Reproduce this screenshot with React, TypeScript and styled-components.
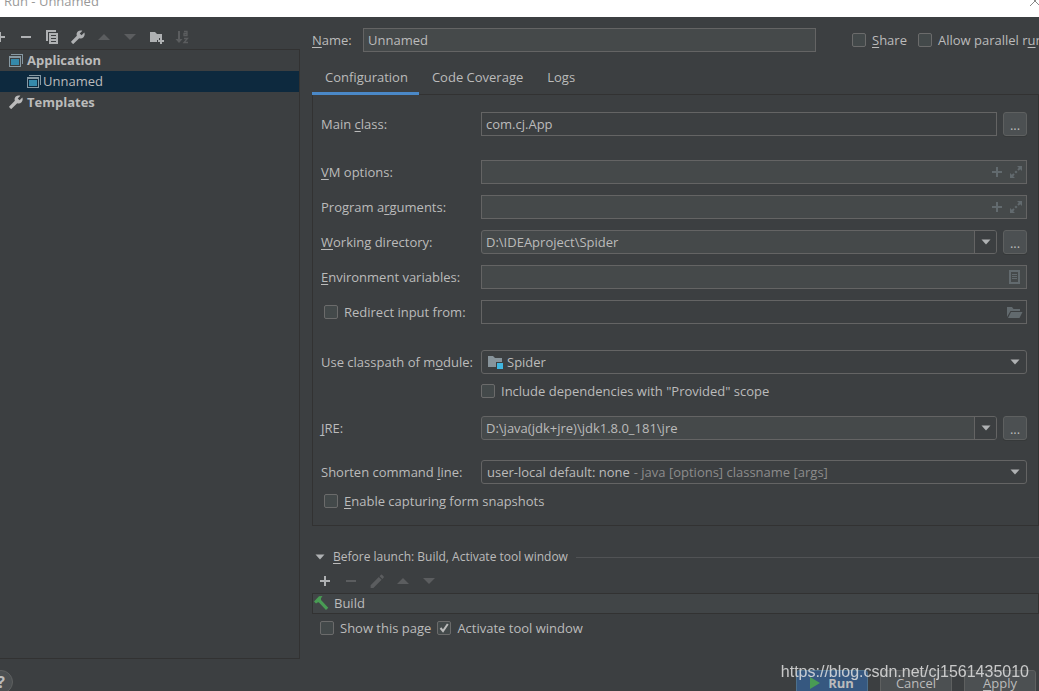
import React, { useId } from 'react';
import styled, { createGlobalStyle, css } from 'styled-components';

const GlobalStyle = createGlobalStyle`
  * { box-sizing: border-box; }
  body {
    margin: 0;
    overflow: hidden;
    background: #3c3f41;
  }
  body, input, button, select {
    font-family: "Open Sans", "Noto Sans", "Noto Sans CJK SC", sans-serif;
    font-size: 13px;
    line-height: 18px;
    color: #bbbbbb;
  }
  u { text-underline-offset: 2px; text-decoration-thickness: 1px; }
`;

const Window = styled.div`
  display: flex;
  flex-direction: column;
  min-height: 100vh;
  overflow: hidden;
`;

const TitleBar = styled.header`
  display: flex;
  justify-content: space-between;
  align-items: flex-end;
  height: 17px;
  padding: 0 0 7px 4px;
  background: #ffffff;
  color: #999999;
`;

const CloseButton = styled.button`
  display: flex;
  width: 10px;
  height: 16px;
  padding: 0;
  border: 0;
  background: none;
`;

const Body = styled.div`
  display: flex;
  flex: 1;
`;

const Sidebar = styled.aside`
  display: flex;
  flex-direction: column;
  flex: none;
  width: 300px;
`;

const Toolbar = styled.div<{ $height: number; $start: number }>`
  display: flex;
  align-items: center;
  gap: 10px;
  height: ${p => p.$height}px;
  margin-left: ${p => p.$start}px;
`;

const SidebarToolbar = styled(Toolbar)`
  padding-top: 8px;
`;

const IconButton = styled.button`
  display: flex;
  width: 16px;
  height: 16px;
  padding: 0;
  border: 0;
  background: none;
  color: #afb1b3;
  &:disabled { color: #5b5d5f; }
`;

const Tree = styled.ul`
  flex: 1;
  margin: 0;
  padding: 0;
  list-style: none;
  border: 1px solid #323232;
  border-left: 0;
`;

const TreeItem = styled.li<{ $level?: number; $selected?: boolean }>`
  display: flex;
  align-items: center;
  gap: ${p => (p.$level ? 1 : 3)}px;
  height: 21px;
  padding-left: ${p => (p.$level ? 26 : 8)}px;
  padding-bottom: 1px;
  font-weight: ${p => (p.$level ? 400 : 700)};
  background: ${p => (p.$selected ? '#0d293e' : 'transparent')};
  color: #bbbbbb;
`;

const Main = styled.main`
  flex: 1;
  min-width: 0;
  padding: 11px 0 18px 12px;
`;

const NameRow = styled.div`
  display: flex;
  align-items: center;
  height: 24px;
  white-space: nowrap;
`;

const NameLabel = styled.label`
  flex: none;
  width: 51px;
`;

const NameOptions = styled.div`
  display: flex;
  gap: 11px;
  flex: none;
  width: 187px;
  margin-left: 36px;
  overflow: hidden;
`;

const fieldBox = css`
  height: 24px;
  border: 1px solid #646464;
  background: #45494a;
`;

const TextInput = styled.input<{ $plain?: boolean }>`
  ${fieldBox}
  flex: 1;
  width: 100%;
  min-width: 0;
  padding: 0 4px;
  outline: none;
  ${p => p.$plain && 'background: #3c3f41;'}
`;

const Tabs = styled.div`
  display: flex;
  height: 35px;
  margin-top: 8px;
  border-bottom: 1px solid #323232;
`;

const Tab = styled.button<{ $active?: boolean }>`
  height: 35px;
  padding: 2px 11px 0 13px;
  border: 0;
  border-bottom: 3px solid ${p => (p.$active ? '#4a88c7' : 'transparent')};
  background: none;
`;

const Panel = styled.section`
  padding: 17px 11px 12px 8px;
  border: 1px solid #323232;
  border-top: 0;
`;

const Row = styled.div<{ $gap?: number }>`
  display: grid;
  grid-template-columns: 160px 1fr;
  align-items: center;
  height: 24px;
  margin-top: ${p => p.$gap ?? 11}px;
  white-space: nowrap;
`;

const Controls = styled.div`
  display: flex;
  gap: 6px;
  grid-column: 2;
  min-width: 0;
`;

const BrowseButton = styled.button`
  flex: none;
  width: 24px;
  height: 24px;
  padding: 2px 0 0;
  border: 1px solid #5e6060;
  border-radius: 3px;
  background: #4c5052;
  box-shadow: 0 1px 0 #36393a;
`;

const IconField = styled.div<{ $plain?: boolean }>`
  ${fieldBox}
  display: flex;
  flex: 1;
  align-items: center;
  gap: 3px;
  padding-right: 2px;
  ${p => p.$plain && 'background: #3c3f41;'}
`;

const BareInput = styled.input`
  flex: 1;
  min-width: 0;
  height: 22px;
  padding: 0 4px;
  border: 0;
  outline: none;
  background: none;
`;

const FieldIcon = styled(IconButton)`
  color: #626a6e;
`;

const Combo = styled.div`
  ${fieldBox}
  display: flex;
  flex: 1;
  min-width: 0;
  border-radius: 3px;
  overflow: hidden;
`;

const ComboArrow = styled.button`
  display: flex;
  align-items: center;
  justify-content: center;
  width: 22px;
  padding: 0;
  border: 0;
  border-left: 1px solid #646464;
  background: #3c3f41;
`;

const SelectBox = styled.div`
  ${fieldBox}
  display: grid;
  flex: 1;
  align-items: center;
  border-radius: 3px;
  background: #3c3f41;
  > * { grid-area: 1 / 1; }
`;

const Select = styled.select`
  appearance: none;
  width: 100%;
  height: 22px;
  padding: 0;
  border: 0;
  outline: none;
  background: none;
  color: transparent;
  option { color: #bbbbbb; background: #3c3f41; }
`;

const SelectValue = styled.span`
  display: flex;
  align-items: center;
  gap: 4px;
  padding: 0 6px 0 5px;
  pointer-events: none;
`;

const Muted = styled.span`
  color: #8c8c8c;
`;

const ArrowSlot = styled.span`
  display: flex;
  margin-left: auto;
`;

const CheckLabel = styled.label<{ $inset?: number }>`
  display: flex;
  align-items: center;
  gap: 6px;
  flex: none;
  padding-left: ${p => p.$inset ?? 0}px;
`;

const CheckBox = styled.input`
  appearance: none;
  flex: none;
  width: 14px;
  height: 14px;
  margin: 0;
  border: 1px solid #6b6b6b;
  border-radius: 2px;
  background: #43494a;
  &:checked + svg { display: block; }
`;

const CheckHolder = styled.span`
  display: grid;
  > * { grid-area: 1 / 1; }
  svg { display: none; pointer-events: none; }
`;

const SectionHeader = styled.div`
  display: flex;
  align-items: center;
  height: 24px;
  margin-top: 19px;
  padding-left: 3px;
  font-size: 12px;
  gap: 8px;
  &::after {
    content: '';
    flex: 1;
    height: 1px;
    background: #515355;
  }
`;

const Expander = styled.button`
  display: flex;
  width: 10px;
  padding: 0;
  border: 0;
  background: none;
`;

const TaskList = styled.ul`
  margin: 0;
  padding: 0;
  list-style: none;
  border: 1px solid #323232;
`;

const Task = styled.li`
  display: flex;
  align-items: center;
  gap: 5px;
  height: 19px;
  padding-bottom: 1px;
  background: #414547;
`;

const LaunchOptions = styled.div`
  display: flex;
  align-items: center;
  gap: 6px;
  height: 24px;
  margin-top: 2px;
  margin-bottom: 1px;
  padding-left: 8px;
`;

const Footer = styled.footer`
  display: flex;
  justify-content: space-between;
  flex: none;
  padding: 11px 3px 8px 0;
`;

const HelpButton = styled.button`
  width: 24px;
  height: 24px;
  margin-left: -11px;
  padding: 0;
  border: 1px solid #5e6060;
  border-radius: 50%;
  background: #4c5052;
  font-size: 16px;
  font-weight: 700;
`;

const Actions = styled.div`
  display: flex;
  gap: 12px;
`;

const ActionButton = styled.button<{ $primary?: boolean }>`
  display: flex;
  align-items: center;
  justify-content: center;
  gap: 8px;
  width: 72px;
  height: 25px;
  padding: 0;
  border: 1px solid ${p => (p.$primary ? '#4c708c' : '#5e6060')};
  border-radius: 3px;
  background: ${p => (p.$primary ? '#365880' : '#4c5052')};
  font-weight: ${p => (p.$primary ? 700 : 400)};
`;

const Watermark = styled.span`
  position: fixed;
  right: 10px;
  bottom: 10px;
  font: 16px/18px "Liberation Sans", sans-serif;
  color: rgba(225, 225, 225, 0.85);
`;

const Svg = ({ children }: { children: React.ReactNode }) => (
  <svg width="16" height="16" viewBox="0 0 16 16" fill="currentColor" aria-hidden="true">
    {children}
  </svg>
);

const PlusIcon = () => <Svg><path d="M7 3h2v4h4v2H9v4H7V9H3V7h4z" /></Svg>;
const MinusIcon = () => <Svg><path d="M3 7h10v2H3z" /></Svg>;
const UpIcon = () => <Svg><path d="M2 11 8 5l6 6z" /></Svg>;
const DownIcon = () => <Svg><path d="M2 5h12l-6 6z" /></Svg>;
const CopyIcon = () => (
  <Svg>
    <path d="M2 1h10v2H4v9H2z" />
    <path fillRule="evenodd" d="M5 4h9v11H5zM7 6v1h5v-1zM7 9v1h5V9zM7 12v1h5v-1z" />
  </Svg>
);
const WrenchIcon = () => (
  <Svg>
    <path
      transform="translate(15.300 .7) scale(-.62 .62)"
      d="M22.700 19l-9.100-9.100c.9-2.300.4-5-1.500-6.900-2-2-5-2.400-7.400-1.300L9 6 6 9 1.600 4.700C.4 7.100.9 10.100 2.900 12.100c1.900 1.900 4.600 2.400 6.900 1.500l9.100 9.100c.4.4 1 .4 1.400 0l2.300-2.300c.5-.4.5-1.100.1-1.400z"
    />
  </Svg>
);
const NewFolderIcon = () => (
  <Svg>
    <path d="M2 3h5l2 2h5v4h-3v2H9v2H2z" />
    <path d="M12 9h2v2h2v2h-2v2h-2v-2h-2v-2h2z" />
  </Svg>
);
const SortIcon = () => (
  <Svg>
    <path d="M4 2h2v8h2.500L5 14 1.500 10H4z" />
    <path d="M10 2.500h3v4h-3V4.500h3M10 9.500h3.500L10 13.500h4" fill="none" stroke="currentColor" strokeWidth="1.300" />
  </Svg>
);
const PencilIcon = () => (
  <Svg>
    <path
      transform="translate(-.6 -.6) scale(.74)"
      d="M3 17.250V21h3.750L17.810 9.940l-3.750-3.750zM20.710 7.040c.39-.39.39-1.020 0-1.410l-2.340-2.340a1 1 0 0 0-1.410 0l-1.830 1.830 3.750 3.750z"
    />
  </Svg>
);
const AppIcon = () => (
  <Svg>
    <path fill="#8799a3" d="M3 2h12v10h-1V3H3z" />
    <path fill="#8799a3" fillRule="evenodd" d="M1 4h12v11H1zM2 6v8h10V6z" />
    <path fill="#3589ab" d="M3 7h8v6H3z" />
  </Svg>
);
const ExpandIcon = () => (
  <Svg>
    <path d="M9 2h5v5l-1.800-1.800-1.500 1.500-1.400-1.400 1.500-1.500zM2 9l1.800 1.800 1.500-1.500 1.400 1.400-1.500 1.500L7 14H2z" />
    <path d="M8 6.500 9.500 8 8 9.500 6.500 8z" />
  </Svg>
);
const ListIcon = () => (
  <Svg>
    <path fillRule="evenodd" d="M1 1h11v14H1zM3 3v10h7V3z" />
    <path d="M4 5h5v1H4zM4 7h5v1H4zM4 9h5v1H4z" />
  </Svg>
);
const OpenFolderIcon = () => (
  <svg width="16" height="16" viewBox="-1 0 16 16" overflow="visible" fill="currentColor" aria-hidden="true">
    <path d="M-2 3h5l1.500 2H11v2H1.500L-2 13z" />
    <path d="M2 8h11.500L10.500 14H-1z" />
  </svg>
);
const ModuleIcon = () => (
  <Svg>
    <path fill="#87939a" d="M1 2h5l2 2h7v4H9v5H1z" />
    <path fill="#40b6e0" d="M10 9h6v6h-6z" />
  </Svg>
);
const HammerIcon = () => (
  <Svg>
    <path fill="#499c54" d="M1 6.500 6 1.200 9.500 1 8 3.300 8 5l7.300 7.700-2.300 2.300-7.300-7.700-1.200.2L3 8.500z" />
  </Svg>
);
const ArrowIcon = () => (
  <svg width="10" height="6" viewBox="0 0 10 6" fill="#afb1b3" aria-hidden="true">
    <path d="M.5.5h9L5 5.500z" />
  </svg>
);
const RunIcon = () => (
  <svg width="10" height="12" viewBox="0 0 10 12" fill="#499c54" aria-hidden="true">
    <path d="M0 0v12l10-6z" />
  </svg>
);

type CheckProps = { children: React.ReactNode; checked?: boolean; inset?: number };
const Check = ({ children, checked, inset }: CheckProps) => (
  <CheckLabel $inset={inset}>
    <CheckHolder>
      <CheckBox type="checkbox" defaultChecked={checked} />
      <svg width="14" height="14" viewBox="0 0 14 14" aria-hidden="true">
        <path d="M3.500 7 6 10 10.800 3" fill="none" stroke="#bbbbbb" strokeWidth="2" />
      </svg>
    </CheckHolder>
    <span>{children}</span>
  </CheckLabel>
);

type FieldProps = { label: React.ReactNode; gap?: number; children: (id: string) => React.ReactNode };
const Field = ({ label, gap, children }: FieldProps) => {
  const id = useId();
  return (
    <Row $gap={gap}>
      <label htmlFor={id}>{label}</label>
      <Controls>{children(id)}</Controls>
    </Row>
  );
};

const ExpandableInput = ({ id }: { id: string }) => (
  <IconField>
    <BareInput id={id} />
    <FieldIcon aria-label="Insert macro"><PlusIcon /></FieldIcon>
    <FieldIcon aria-label="Expand"><ExpandIcon /></FieldIcon>
  </IconField>
);

const PathCombo = ({ id, value }: { id: string; value: string }) => (
  <>
    <Combo>
      <BareInput id={id} defaultValue={value} />
      <ComboArrow aria-label="Show history"><ArrowIcon /></ComboArrow>
    </Combo>
    <BrowseButton aria-label="Browse">...</BrowseButton>
  </>
);

export default function App() {
  return (
    <Window>
      <GlobalStyle />
      <TitleBar>
        <span>Run - Unnamed</span>
        <CloseButton aria-label="Close">
          <svg width="10" height="16" viewBox="0 0 10 16" stroke="#888888" fill="none" aria-hidden="true">
            <path d="M1 12 11 2M1 2l10 10" />
          </svg>
        </CloseButton>
      </TitleBar>
      <Body>
        <Sidebar>
          <SidebarToolbar $height={32} $start={-8}>
            <IconButton aria-label="Add"><PlusIcon /></IconButton>
            <IconButton aria-label="Remove"><MinusIcon /></IconButton>
            <IconButton aria-label="Copy"><CopyIcon /></IconButton>
            <IconButton aria-label="Edit templates"><WrenchIcon /></IconButton>
            <IconButton aria-label="Move up" disabled><UpIcon /></IconButton>
            <IconButton aria-label="Move down" disabled><DownIcon /></IconButton>
            <IconButton aria-label="New folder"><NewFolderIcon /></IconButton>
            <IconButton aria-label="Sort" disabled><SortIcon /></IconButton>
          </SidebarToolbar>
          <Tree>
            <TreeItem><AppIcon />Application</TreeItem>
            <TreeItem $level={1} $selected><AppIcon />Unnamed</TreeItem>
            <TreeItem><WrenchIcon />Templates</TreeItem>
          </Tree>
        </Sidebar>
        <Main>
          <NameRow>
            <NameLabel htmlFor="name"><u>N</u>ame:</NameLabel>
            <TextInput id="name" defaultValue="Unnamed" />
            <NameOptions>
              <Check><u>S</u>hare</Check>
              <Check>Allow parallel r<u>u</u>n</Check>
            </NameOptions>
          </NameRow>
          <Tabs role="tablist">
            <Tab role="tab" aria-selected="true" $active>Configuration</Tab>
            <Tab role="tab">Code Coverage</Tab>
            <Tab role="tab">Logs</Tab>
          </Tabs>
          <Panel>
            <Field gap={0} label={<>Main <u>c</u>lass:</>}>
              {id => (
                <>
                  <TextInput id={id} $plain defaultValue="com.cj.App" />
                  <BrowseButton aria-label="Browse">...</BrowseButton>
                </>
              )}
            </Field>
            <Field gap={24} label={<><u>V</u>M options:</>}>{id => <ExpandableInput id={id} />}</Field>
            <Field label={<>Program a<u>r</u>guments:</>}>{id => <ExpandableInput id={id} />}</Field>
            <Field label={<><u>W</u>orking directory:</>}>
              {id => <PathCombo id={id} value="D:\IDEAproject\Spider" />}
            </Field>
            <Field label={<><u>E</u>nvironment variables:</>}>
              {id => (
                <IconField>
                  <BareInput id={id} />
                  <FieldIcon aria-label="Edit variables"><ListIcon /></FieldIcon>
                </IconField>
              )}
            </Field>
            <Row>
              <Check inset={3}>Redirect input from:</Check>
              <Controls>
                <IconField $plain>
                  <BareInput aria-label="Input file" disabled />
                  <FieldIcon aria-label="Open file"><OpenFolderIcon /></FieldIcon>
                </IconField>
              </Controls>
            </Row>
            <Field gap={26} label={<>Use classpath of m<u>o</u>dule:</>}>
              {id => (
                <SelectBox>
                  <Select id={id}><option>Spider</option></Select>
                  <SelectValue aria-hidden="true">
                    <ModuleIcon />Spider
                    <ArrowSlot><ArrowIcon /></ArrowSlot>
                  </SelectValue>
                </SelectBox>
              )}
            </Field>
            <Row $gap={5}>
              <Controls><Check>Include dependencies with "Provided" scope</Check></Controls>
            </Row>
            <Field gap={13} label={<><u>J</u>RE:</>}>
              {id => <PathCombo id={id} value="D:\java(jdk+jre)\jdk1.8.0_181\jre" />}
            </Field>
            <Field gap={20} label={<>Shorten command <u>l</u>ine:</>}>
              {id => (
                <SelectBox>
                  <Select id={id}><option>user-local default: none</option></Select>
                  <SelectValue aria-hidden="true">
                    user-local default: none <Muted>- java [options] classname [args]</Muted>
                    <ArrowSlot><ArrowIcon /></ArrowSlot>
                  </SelectValue>
                </SelectBox>
              )}
            </Field>
            <Row $gap={5}>
              <Check inset={3}><u>E</u>nable capturing form snapshots</Check>
            </Row>
          </Panel>
          <SectionHeader>
            <Expander aria-label="Collapse"><ArrowIcon /></Expander>
            <span><u>B</u>efore launch: Build, Activate tool window</span>
          </SectionHeader>
          <Toolbar $height={24} $start={5}>
            <IconButton aria-label="Add task"><PlusIcon /></IconButton>
            <IconButton aria-label="Remove task" disabled><MinusIcon /></IconButton>
            <IconButton aria-label="Edit task" disabled><PencilIcon /></IconButton>
            <IconButton aria-label="Move task up" disabled><UpIcon /></IconButton>
            <IconButton aria-label="Move task down" disabled><DownIcon /></IconButton>
          </Toolbar>
          <TaskList>
            <Task><HammerIcon />Build</Task>
          </TaskList>
          <LaunchOptions>
            <Check>Show this page</Check>
            <Check checked>Activate tool window</Check>
          </LaunchOptions>
        </Main>
      </Body>
      <Footer>
        <HelpButton aria-label="Help">?</HelpButton>
        <Actions>
          <ActionButton $primary><RunIcon />Run</ActionButton>
          <ActionButton>Cancel</ActionButton>
          <ActionButton><span><u>A</u>pply</span></ActionButton>
        </Actions>
      </Footer>
      <Watermark>https://blog.csdn.net/cj1561435010</Watermark>
    </Window>
  );
}
